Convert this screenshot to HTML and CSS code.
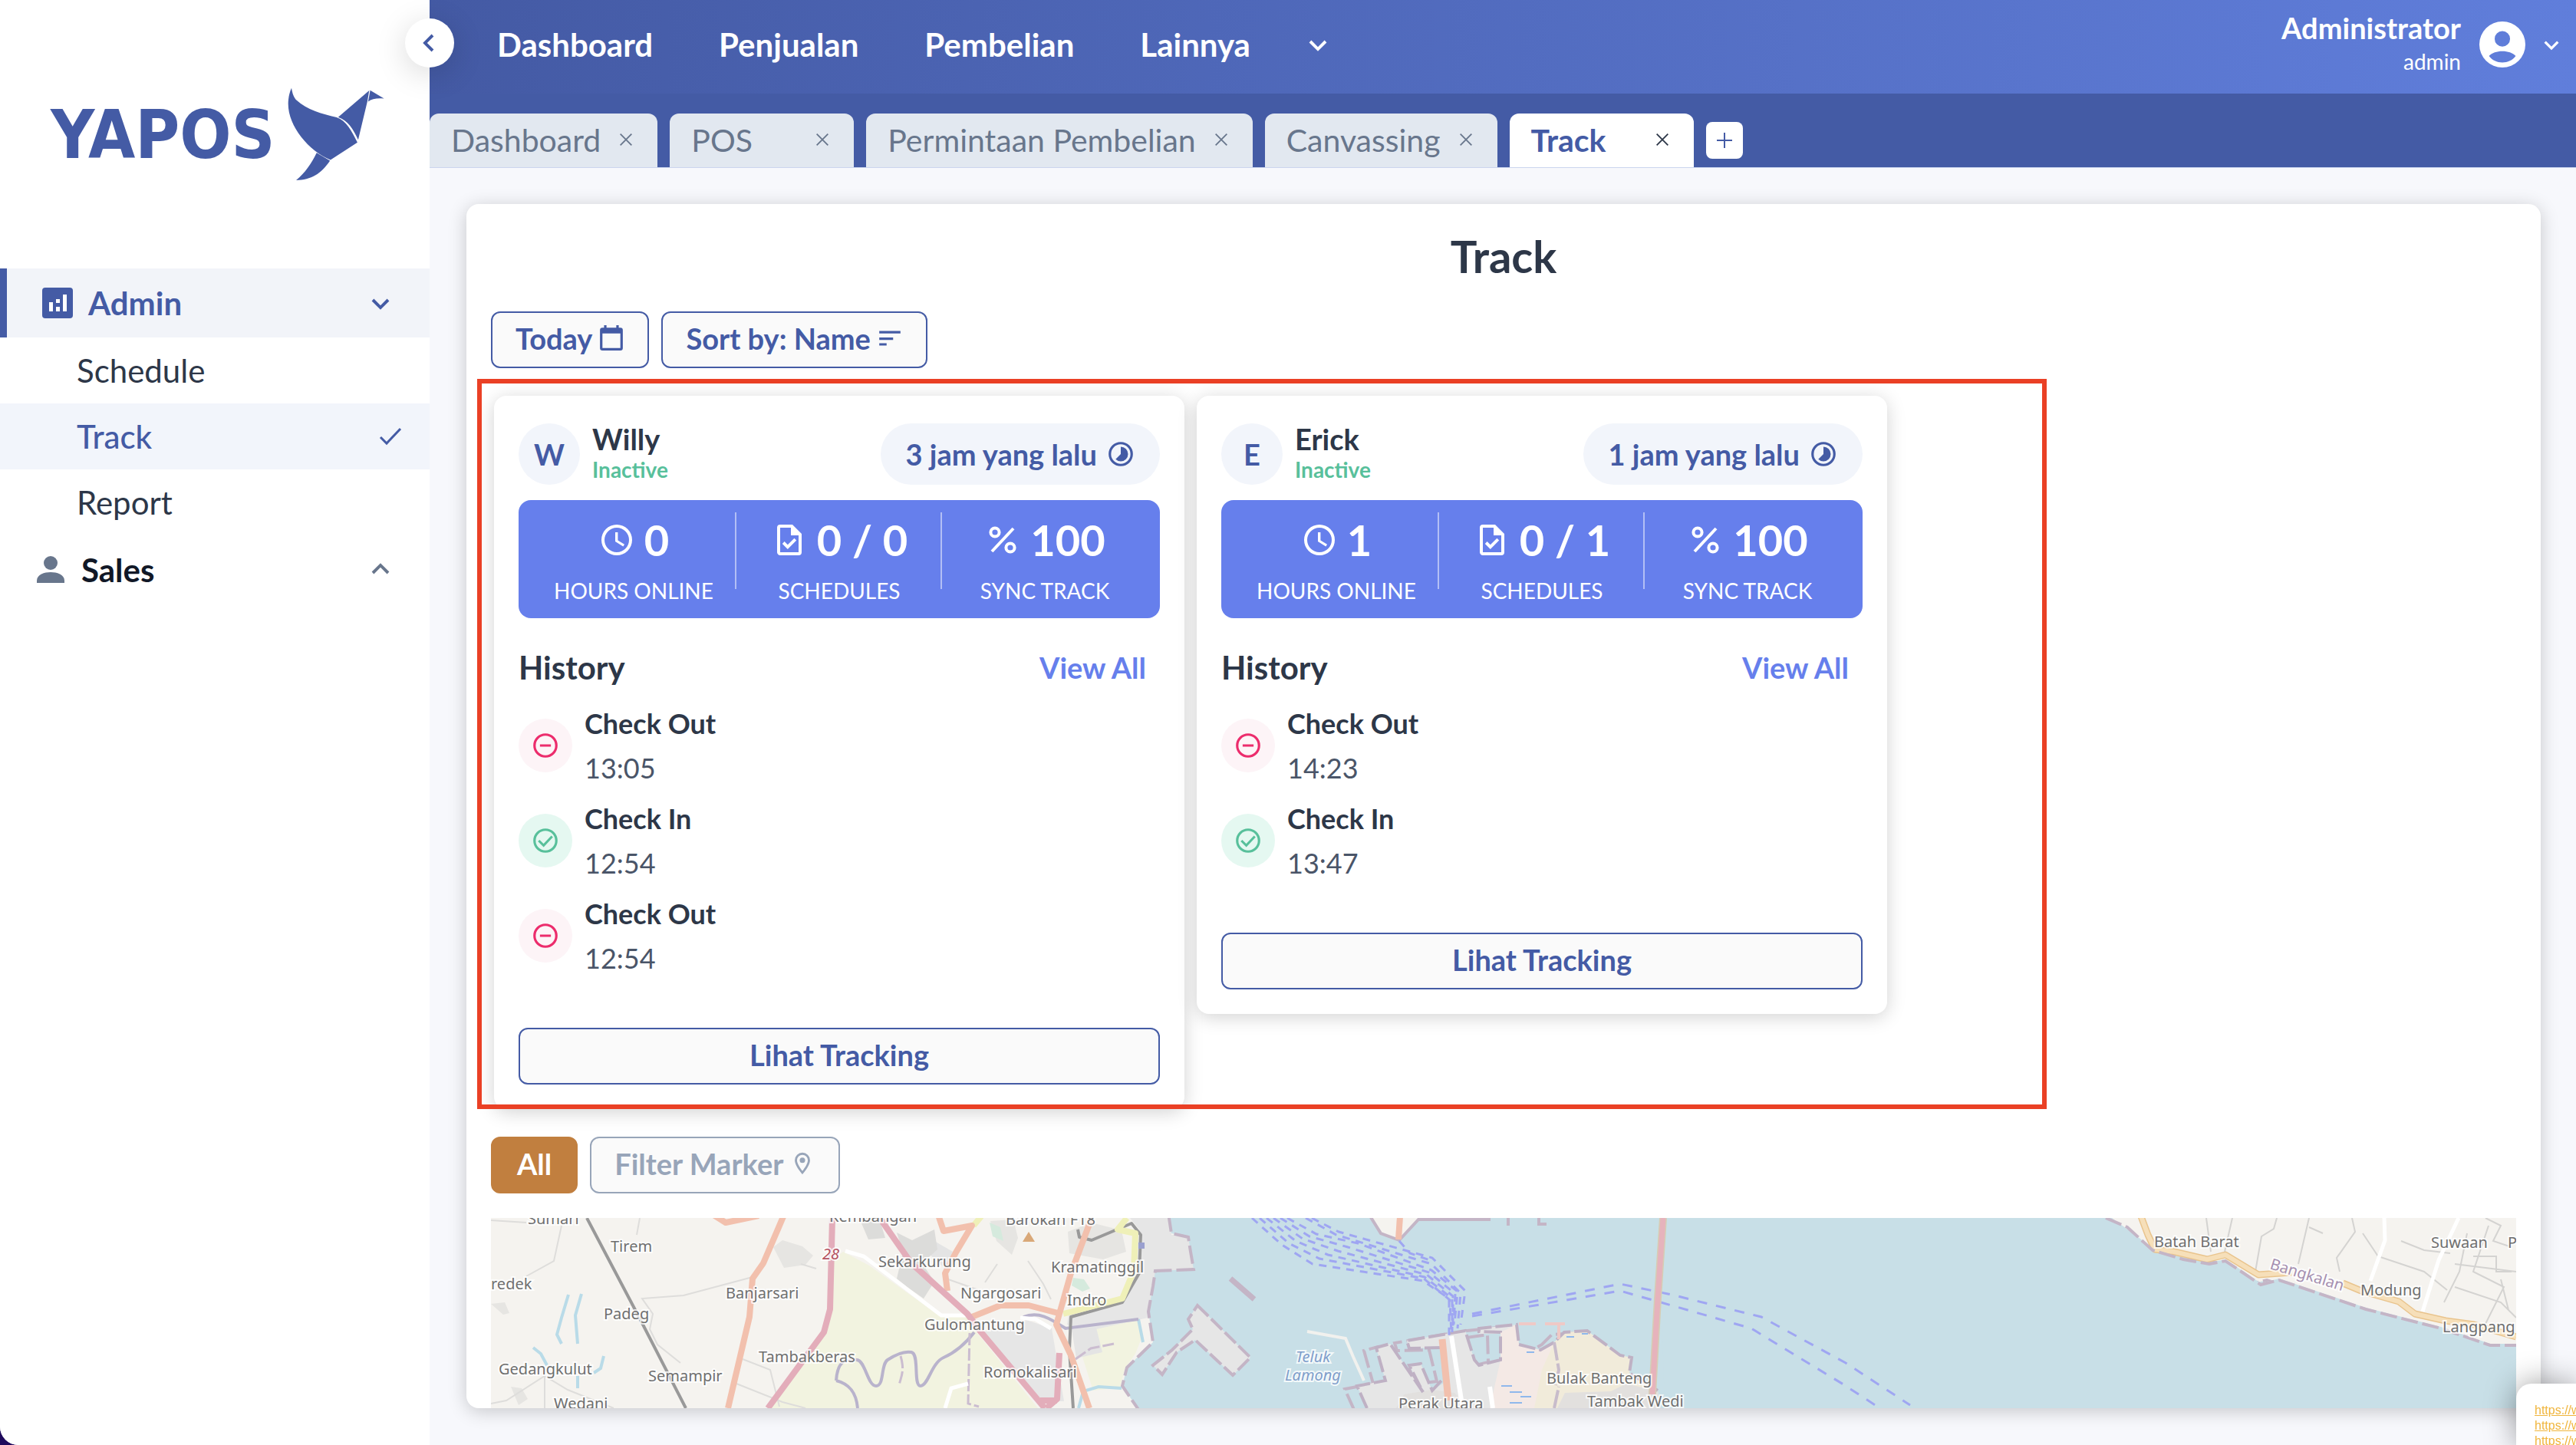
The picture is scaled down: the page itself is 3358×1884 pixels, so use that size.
FILE: index.html
```
<!DOCTYPE html>
<html lang="id">
<head>
    <meta charset="UTF-8">
    <title>YAPOS - Track</title>
    <link rel="stylesheet" href="styles.css">
</head>
<body>

<!-- Shared icons -->
<svg class="sprite" aria-hidden="true">
    <symbol id="chevron" viewBox="0 0 24 24"><path d="M16.3 9.3 12 13.6 7.7 9.3 6.3 10.7 12 16.4l5.7-5.7z"/></symbol>
    <symbol id="close" viewBox="0 0 24 24"><path d="m4 4 16 16M20 4 4 20" fill="none" stroke="currentColor" stroke-width="2"/></symbol>
    <symbol id="clock" viewBox="0 0 24 24"><path d="M12 2a10 10 0 1 0 0 20 10 10 0 0 0 0-20zm0 18a8 8 0 1 1 0-16 8 8 0 0 1 0 16z"/><path d="M12.7 7H11v6l5.2 3.2.8-1.3-4.3-2.6z"/></symbol>
    <symbol id="task" viewBox="0 0 24 24"><path d="M14 2H6a2 2 0 0 0-2 2v16c0 1.1.9 2 2 2h12a2 2 0 0 0 2-2V8zm4 18H6V4h7v5h5zM8.8 13l-1.4 1.5 3.5 3.5 5.7-5.7-1.4-1.4-4.3 4.2z"/></symbol>
    <symbol id="percent" viewBox="0 0 24 24"><g fill="none" stroke="currentColor" stroke-width="2"><circle cx="7" cy="7" r="2.8"/><circle cx="17" cy="17" r="2.8"/><path d="M19 4.5 5 19.5"/></g></symbol>
    <symbol id="timelapse" viewBox="0 0 24 24"><path d="M16.24 7.76A6 6 0 0 0 12 6v6l-4.24 4.24a6 6 0 0 0 8.49 0 6 6 0 0 0-.01-8.48zM12 2a10 10 0 1 0 0 20 10 10 0 0 0 0-20zm0 18a8 8 0 1 1 0-16 8 8 0 0 1 0 16z"/></symbol>
    <symbol id="check-out" viewBox="0 0 24 24"><path d="M12 3a9 9 0 1 0 0 18 9 9 0 0 0 0-18zM7.5 12h9" fill="none" stroke="currentColor" stroke-width="2"/></symbol>
    <symbol id="check-in" viewBox="0 0 24 24"><path d="M12 3a9 9 0 1 0 0 18 9 9 0 0 0 0-18zM6.5 12l4 4 7-7.5" fill="none" stroke="currentColor" stroke-width="2"/></symbol>
</svg>

<div class="app">
    <!-- Sidebar -->
    <aside class="sidebar">
        <a href="#" class="logo" aria-label="YAPOS">
            <span class="logo-text">YAPOS</span>
            <svg class="logo-bird" viewBox="75 70 380 365">
                <path d="M90 72c3 20 9 38 20 48 40 36 97 53 156 67 38 13 58 52 81 98l-105 68c-90-38-175-143-164-236 2-18 6-32 12-45z"/>
                <path d="M272 186 393 82l-7 42-36 150c-20-42-40-75-78-88z"/>
                <path d="m397 81 54 32c-26-2-48 0-62 12z"/>
                <path d="m188 325 52 31c-35 52-73 75-132 76 35-29 59-65 80-107z"/>
            </svg>
        </a>
        <nav>
            <a href="#" class="menu menu-active">
                <svg class="menu-icon" viewBox="0 0 40 40"><rect width="40" height="40" rx="4"/><path fill="#fff" d="M9 19h5v12H9zM18 15h5v5h-5zM18 25h5v6h-5zM27 9h5v22h-5z"/></svg>
                <span>Admin</span>
                <svg class="chevron"><use href="#chevron"/></svg>
            </a>
            <a href="#" class="submenu">Schedule</a>
            <a href="#" class="submenu submenu-active">Track
                <svg class="submenu-check" viewBox="0 0 30 24"><path d="m2 13 8 8L28 2" fill="none" stroke="currentColor" stroke-width="3"/></svg>
            </a>
            <a href="#" class="submenu">Report</a>
            <a href="#" class="menu">
                <svg class="menu-icon" viewBox="0 0 40 40"><circle cx="20" cy="11" r="9"/><path d="M2 37v-3c0-8 10-11 18-11s18 3 18 11v3z"/></svg>
                <span>Sales</span>
                <svg class="chevron chevron-up"><use href="#chevron"/></svg>
            </a>
        </nav>
    </aside>

    <div class="content">
        <button class="collapse" aria-label="Collapse sidebar"><svg class="chevron chevron-left"><use href="#chevron"/></svg></button>

        <!-- Top navigation -->
        <header class="topbar">
            <nav class="topnav">
                <a href="#">Dashboard</a>
                <a href="#">Penjualan</a>
                <a href="#">Pembelian</a>
                <a href="#" class="topnav-more">Lainnya <svg class="chevron"><use href="#chevron"/></svg></a>
            </nav>
            <button class="user">
                <span class="user-name"><b>Administrator</b><small>admin</small></span>
                <svg class="user-icon" viewBox="2 2 20 20"><path fill-rule="evenodd" d="M12 2a10 10 0 1 0 0 20 10 10 0 0 0 0-20zm0 4.2a3.35 3.35 0 1 1 0 6.7 3.35 3.35 0 0 1 0-6.7zM6.2 17c1.3-1.4 3.4-2.1 5.8-2.1s4.5.7 5.8 2.1c-1.4 1.9-3.5 2.8-5.8 2.8S7.6 18.9 6.2 17z"/></svg>
                <svg class="chevron chevron-small"><use href="#chevron"/></svg>
            </button>
        </header>

        <!-- Open tabs -->
        <div class="tabs">
            <div class="tab"><a href="#">Dashboard</a><button aria-label="Close"><svg><use href="#close"/></svg></button></div>
            <div class="tab"><a href="#">POS</a><button aria-label="Close"><svg><use href="#close"/></svg></button></div>
            <div class="tab"><a href="#">Permintaan Pembelian</a><button aria-label="Close"><svg><use href="#close"/></svg></button></div>
            <div class="tab"><a href="#">Canvassing</a><button aria-label="Close"><svg><use href="#close"/></svg></button></div>
            <div class="tab tab-active"><a href="#">Track</a><button aria-label="Close"><svg><use href="#close"/></svg></button></div>
            <button class="tab-add" aria-label="New tab"><svg viewBox="0 0 20 20"><path d="M10 0v20M0 10h20" stroke="currentColor" stroke-width="2"/></svg></button>
        </div>

        <main class="page">
            <section class="panel">
                <h1>Track</h1>
                <div class="toolbar">
                    <button class="btn">Today
                        <svg class="btn-icon" viewBox="0 0 32 32"><path fill-rule="evenodd" d="M7 0h3v3h12V0h3v3h2a3 3 0 0 1 3 3v22a3 3 0 0 1-3 3H5a3 3 0 0 1-3-3V6a3 3 0 0 1 3-3h2zM5 10v18h22V10z"/></svg>
                    </button>
                    <button class="btn">Sort by: Name
                        <svg class="btn-icon" viewBox="0 0 32 32"><path d="M3 7h26v3H3zM3 15h17v3H3zM3 22h9v3H3z"/></svg>
                    </button>
                </div>

                <div class="people">
                    <article class="card">
                        <div class="card-head">
                            <span class="avatar">W</span>
                            <div class="who"><b>Willy</b><small>Inactive</small></div>
                            <span class="pill">3 jam yang lalu <svg><use href="#timelapse"/></svg></span>
                        </div>
                        <div class="stats">
                            <div class="stat"><p><svg><use href="#clock"/></svg> 0</p><span>HOURS ONLINE</span></div>
                            <div class="stat"><p><svg><use href="#task"/></svg>0 / 0</p><span>SCHEDULES</span></div>
                            <div class="stat"><p><svg><use href="#percent"/></svg>100</p><span>SYNC TRACK</span></div>
                        </div>
                        <div class="history-head"><h2>History</h2><a href="#">View All</a></div>
                        <ul class="history">
                            <li><span class="dot dot-out"><svg><use href="#check-out"/></svg></span><div><b>Check Out</b><time>13:05</time></div></li>
                            <li><span class="dot dot-in"><svg><use href="#check-in"/></svg></span><div><b>Check In</b><time>12:54</time></div></li>
                            <li><span class="dot dot-out"><svg><use href="#check-out"/></svg></span><div><b>Check Out</b><time>12:54</time></div></li>
                        </ul>
                        <button class="btn btn-block">Lihat Tracking</button>
                    </article>

                    <article class="card">
                        <div class="card-head">
                            <span class="avatar">E</span>
                            <div class="who"><b>Erick</b><small>Inactive</small></div>
                            <span class="pill">1 jam yang lalu <svg><use href="#timelapse"/></svg></span>
                        </div>
                        <div class="stats">
                            <div class="stat"><p><svg><use href="#clock"/></svg> 1</p><span>HOURS ONLINE</span></div>
                            <div class="stat"><p><svg><use href="#task"/></svg>0 / 1</p><span>SCHEDULES</span></div>
                            <div class="stat"><p><svg><use href="#percent"/></svg>100</p><span>SYNC TRACK</span></div>
                        </div>
                        <div class="history-head"><h2>History</h2><a href="#">View All</a></div>
                        <ul class="history">
                            <li><span class="dot dot-out"><svg><use href="#check-out"/></svg></span><div><b>Check Out</b><time>14:23</time></div></li>
                            <li><span class="dot dot-in"><svg><use href="#check-in"/></svg></span><div><b>Check In</b><time>13:47</time></div></li>
                        </ul>
                        <button class="btn btn-block">Lihat Tracking</button>
                    </article>

                    <div class="highlight"></div>
                </div>

                <div class="toolbar filters">
                    <button class="btn btn-all">All</button>
                    <button class="btn btn-muted">Filter Marker
                        <svg class="btn-icon" viewBox="0 0 24 24"><path d="M12 2a7 7 0 0 0-7 7c0 5.2 7 13 7 13s7-7.8 7-13a7 7 0 0 0-7-7zM7 9a5 5 0 0 1 10 0c0 2.9-2.9 7.2-5 9.9C9.9 16.2 7 11.8 7 9z"/><circle cx="12" cy="9" r="2.5"/></svg>
                    </button>
                </div>

                <!-- Map -->
                <svg class="map" viewBox="0 0 2640 248" preserveAspectRatio="xMidYMin slice">
                    <rect width="2640" height="248" fill="#f5f3ef"/>
                    <!-- land use -->
                    <path fill="#f2f3e0" d="M459 44l34 18 91 65h40l9 22 80 99H361l55-76 25-40 4-77z"/>
                    <path fill="#f2f3e0" d="M790 140l54-8 6 20-10 25-14 20-6 24-35 4-16-50z"/>
                    <path fill="#e6e6e6" d="M640 149l55-17 36 12 16 95h-28zM833 0h54v22h30v47h-50l-6 60-90 20-20-10 2-14 60-10 20-20 8-50 4-30z"/>
                    <path fill="#e4e4e4" d="M757 145l32-2 8 32-34 8zM578 30l24 14-10 22-24-22z"/>
                    <path fill="#dcdcda" d="M480 0h26l8 26-22 2zM529 19l20 10 29-14 4 26-20 18 16 24-14 22-20-14-15-12 8-34z"/>
                    <path fill="#e6e5e2" d="M368 38l12-9 26 8 14 12-10 12-28 4zM752 18l30-12 40 10 6 28-30 10-44-8zM651 4l30-2 6 24-8 22-20-18zM26 220l14 2 8 14-12 8zM0 112l18-2 6 14-8 2z"/>
                    <path fill="#d5eadd" d="M759 78l14 2 8 12-10 4-14-8zM650 6l14 6 4 18-14-6z"/>
                    <!-- sea -->
                    <path fill="#c8dfe7" stroke="#c4b5c6" stroke-width="4" stroke-dasharray="24 6" d="M883-6l4 26 22 5 3 19 4 23-50 2-3 20-6 33 6 40-34 33-6 24 24 35h660l-2-26-37-23 3-20-15-3-43-32-30 2-13 13-18 10-28-7-3-26-49 5v9l27-4 1 36-28 7-6-7-12-38-76 13 3 10 42-1 10 41-16 2-6 15-15-36-15 2 18 35-8 2-35-65-18 5 12 43-37 7 13 29h1532l-34-83-34-3-64-22-98-25-113-38-24 6-46-31-21 4-34-4-40-14-33-28-28-18z"/>
                    <path fill="#c8dfe7" d="M1523 0h590l60 44 67 14 21-4 46 31 24-6 113 38 98 25 64 22h34v84H1530z"/>
                    <path fill="#e6e6e6" d="M1129 219l37-7-12-43 18-5 43 63-18-35 15-2 15 35 22-15-10-41-42 1-3-10 76-13 12 38 6 7 28-5v-36h-28v-7l49-5 3 26v83H1142z"/>
                    <path fill="#f4e9e5" d="M1316 149l21-10 3 26 28 7 18-10 8 86h-92l14-63z"/>
                    <path fill="#f1ebda" d="M1386 162l13-13 30-2 43 32 15 3-3 20 37 23 3 23h-164l10-50z"/>
                    <path fill="#e2e0de" d="M1390 248l10-20 60-2 20-10 41 10 3 22zM1180 248l10-18 36-6 30 4 20 20z"/>
                    <path fill="none" stroke="#bfb1c4" stroke-width="4" stroke-dasharray="22 5" d="M1142 248l-13-29 37-7-12-43 18-5 43 63-18-35 15-2 15 35 12-13M1239 169l-42 1-3-10 76-13 12 38 6 7 28-7v-36l-28-1v-4l49-5 3 26 28 7 18-10 13-13 30-2 43 32 15 3-3 20 37 23"/>
                    <path fill="none" stroke="#c8bccb" stroke-width="4" stroke-dasharray="24 4" d="M1386 162l6 36-4 20M1386 248l6-28"/>
                    <path fill="none" stroke="#f2c0ad" stroke-width="9" d="M1240 158l8 80"/>
                    <path fill="none" stroke="#fff" stroke-width="6" d="M1252 154l14 90M1302 220l4 28"/>
                    <path fill="none" stroke="#efc9c6" stroke-width="4" d="M1340 138h22M1374 138h26M1392 140v18"/>
                    <path fill="none" stroke="#8fb8ec" stroke-width="2" d="M1317 219h14M1328 227h16M1342 233h14M1328 241h16M1350 175h10M1402 155h10M1422 151h8"/>
                    <path fill="#e6e6e6" stroke="#c4b5c6" stroke-width="4" stroke-dasharray="20 5" d="M921 114l69 68-23 23-49-46-24 16-19 29-12-12 25-20 27-27-6-13z"/>
                    <path fill="none" stroke="#c4b5c6" stroke-width="7" d="M964 79l31 27"/>
                    <path fill="none" stroke="#f1f1ee" stroke-width="4" d="M1064 148l50 9 10 24M1124 181l14 31"/>
                    <path fill="#f5f3ef" stroke="#c4b5c6" stroke-width="4" d="M1145-4l15 24 24 9 25-27h92v-6z"/>
                    <path fill="none" stroke="#c4b5c6" stroke-width="4" d="M1326 0v10M1366-2v10h10"/>
                    <path fill="none" stroke="#f2c0ad" stroke-width="8" d="M1185-2l-2 30"/>
                    <!-- ferry lines -->
                    <g fill="none" stroke="#9fa6f2" stroke-width="3" stroke-dasharray="10 8">
                        <path d="M992 0l39 35 40 25 144 22 34 23v50"/>
                        <path d="M1002 0l38 33 40 20 136 26 34 28 2 44"/>
                        <path d="M1011 0l38 30 42 18 126 29 36 28v44"/>
                        <path d="M1020 0l38 27 46 16 116 31 34 28v40"/>
                        <path d="M1029 0l38 24 50 14 106 33 34 28-2 40"/>
                        <path d="M1038 0l38 21 54 12 96 35 34 28-4 42"/>
                        <path d="M1062 0l40 22 124 38 38 38-4 46"/>
                        <path d="M1070 0l35 18 122 34 43 43-6 44"/>
                        <path d="M1184 30l14 16 29 10"/>
                        <path stroke-dasharray="13 12" d="M1279 125l193-39 67 14 117 29 110 60 84 55"/>
                        <path stroke-dasharray="13 12" d="M1279 128l193-33 67 19 104 30 120 73 43 28"/>
                    </g>
                    <path fill="none" stroke="#d6cdb4" stroke-width="10" d="M1528 0l-7 105-7 125"/>
                    <path fill="none" stroke="#e6b3bc" stroke-width="7" d="M1528 0l-7 105-7 125"/>
                    <!-- small roads and creeks -->
                    <path fill="none" stroke="#dedddb" stroke-width="2" d="M0 3l46 3M92 10l-10 46-36 20M194 0l-4 22M341 77l-90 24-54 4 14 20-4 20 10 20 30 24M0 242l20-4 50-32 30 18 60 24M70 206v42M328 184l36 14 12 48M320 216l60 24 30 8M404 60l20 6M660 60l-16 24M700 56l20 30 10 20M596 80l40 14 20 10"/>
                    <path fill="none" stroke="#d4d3d1" stroke-width="2" d="M2236 0l6 44M2270 0l-10 44M2328 0l-4 14-16 10-8 46M2370 0l-14 60M2370 12l18 8M2426 0l4 18-24 34 4 18M2440 20l20 30 60 20 30 24M2490 30l30 12 34 4M2576 20l-10 50-20 40M2604 10l-20 60 40 20-30 60M2600 0l20 10-10 20 24 8M2560 60l80 10M2560 90l60 20 20 20M2584 50h30v20h20M2620 80l10 40"/>
                    <path fill="none" stroke="#b9dbe8" stroke-width="4" d="M101 100l-9 30-6 22 6 12M118 99l-8 28 3 37M55 169l10 8 8 15M147 180l-4 16-9 6M113 206v16M844 132l6 30M766 248l6-22 20-6 30 2"/>
                    <path fill="none" stroke="#b9b3cc" stroke-width="4" d="M450 212c2-30 16-28 27-27s14 34 25 34 6-28 15-34 20-12 31-10 2 44 12 44 14-30 30-37 30-20 40-33M694 129c20-8 35 2 55 15l95-12M450 212c16 4 26 14 28 36"/>
                    <path fill="none" stroke="#cbbdd0" stroke-width="3" stroke-dasharray="16 4" d="M624 150l-2 92 14 4M534 180c6 20 0 28-2 38M762 184l20-14 30-6"/>
                    <path fill="none" stroke="#fff" stroke-width="5" d="M462 43l24 7 101 77h37M622 216l-22 6-8 26M2468 0l1 29-19 53M2565 0l-26 55-21 67M690 130l20 2 20 12"/>
                    <!-- main roads -->
                    <g fill="none" stroke-width="8" stroke-linejoin="round">
                        <path stroke="#999" stroke-width="4" d="M125 0l71 135 58 113M765 15l2 10 16 4 52-22 12 15-2 50-22 38-67 19-2 43 5 76"/>
                        <path stroke="#eff0b8" d="M629 10l10-12M829 0l-12 15 23 5-2 49-15 36-77 20"/>
                        <path stroke="#f2c0ad" d="M382-4l-27 63-14 20-4 50-28 119M290-4l16 10 43-9M583-4l7 21 37-7-21 35-14 27 3 23M627 129l37-15h37l42 11M783 0l-27 72-19 67 19 40 24 69"/>
                        <path stroke="#e3adba" d="M445 0l-3 119-8 30-73 99M504-4l44 63 73 66 18 24 83 99M741 176l-3 60-14 12M716 238h22"/>
                        <path stroke="#e9c48d" stroke-width="9" d="M2151-2l9 24 9 19 25 3 43 10 24-6 43 26 43-3M2414 85l24 10 49 14 21 16 40 9 37 5 55 16"/>
                        <path stroke="#f6dfb9" stroke-width="6" d="M2151-2l9 24 9 19 25 3 43 10 24-6 43 26 43-3M2414 85l24 10 49 14 21 16 40 9 37 5 55 16"/>
                    </g>
                    <path fill="none" stroke="#c4b5c6" stroke-width="4" stroke-dasharray="22 6" d="M2105 0l28 12 33 30 40 12 34 6 21-4 46 31 24-6 113 38 98 25 64 22h34"/>
                    <path fill="#d9a878" d="M701 18l8 13h-16z"/>
                    <rect x="844" y="32" width="8" height="8" fill="#9aa0cf"/>
                    <!-- place names -->
                    <g class="places">
                        <text x="48" y="8">Sumari</text>
                        <text x="156" y="44">Tirem</text>
                        <text x="0" y="93">redek</text>
                        <text x="147" y="132">Padeg</text>
                        <text x="10" y="204">Gedangkulut</text>
                        <text x="205" y="213">Semampir</text>
                        <text x="82" y="249">Wedani</text>
                        <text x="306" y="105">Banjarsari</text>
                        <text x="441" y="5">Kembangan</text>
                        <text x="671" y="9">Barokah F18</text>
                        <text x="505" y="64">Sekarkurung</text>
                        <text x="730" y="71">Kramatinggil</text>
                        <text x="612" y="105">Ngargosari</text>
                        <text x="751" y="114">Indro</text>
                        <text x="565" y="146">Gulomantung</text>
                        <text x="349" y="188">Tambakberas</text>
                        <text x="642" y="208">Romokalisari</text>
                        <text x="1376" y="216">Bulak Banteng</text>
                        <text x="1429" y="246">Tambak Wedi</text>
                        <text x="1183" y="249">Perak Utara</text>
                        <text x="2168" y="38">Batah Barat</text>
                        <text x="2529" y="39">Suwaan</text>
                        <text x="2629" y="39">P</text>
                        <text x="2437" y="101">Modung</text>
                        <text x="2544" y="149">Langpang</text>
                        <text class="place-road" x="432" y="54">28</text>
                        <text class="place-sea" x="1049" y="188">Teluk</text>
                        <text class="place-sea" x="1035" y="212">Lamong</text>
                        <text class="place-region" transform="translate(2318 66) rotate(17)">Bangkalan</text>
                    </g>
                </svg>
            </section>
        </main>
    </div>
</div>

<!-- Link popup in the corner -->
<div class="popup">
    <a href="#">https://w</a>
    <a href="#">https://w</a>
    <a href="#">https://w</a>
</div>

</body>
</html>
```
FILE: styles.css
```
* {
    box-sizing: border-box;
}

body {
    margin: 0;
    font-family: Lato, "Open Sans", sans-serif;
    font-size: 38px;
    color: #2d3748;
    background-color: #1f0a5c;
}

a {
    color: inherit;
    text-decoration: none;
}

button {
    font: inherit;
    color: inherit;
    background: none;
    border: none;
    padding: 0;
    cursor: pointer;
}

svg {
    fill: currentColor;
    flex-shrink: 0;
}

.sprite {
    display: none;
}

.app {
    display: flex;
    height: 100vh;
    overflow: hidden;
    background-color: #f7f8fc;
    border-bottom-left-radius: 24px;
}

.chevron {
    width: 48px;
    height: 48px;
}

.chevron-up {
    transform: rotate(180deg);
}

.chevron-left {
    transform: rotate(90deg);
}

.chevron-small {
    width: 40px;
    height: 40px;
}

/* Sidebar */
.sidebar {
    flex: 0 0 560px;
    min-width: 0;
    background-color: white;
    font-size: 42px;
}

.logo {
    display: flex;
    align-items: center;
    justify-content: space-between;
    height: 350px;
    padding: 0 58px 0 66px;
    color: #445ba5;
}

.logo-text {
    font-family: "Liberation Sans Narrow", "DejaVu Sans Condensed", sans-serif;
    font-size: 88px;
    font-weight: bold;
}

.logo-bird {
    width: 127px;
    height: 122px;
}

.menu {
    display: flex;
    align-items: center;
    height: 90px;
    padding: 0 40px 0 46px;
    font-weight: bold;
    color: #111827;
}

.menu span {
    flex: 1;
    padding-left: 20px;
}

.menu svg {
    color: #68768c;
}

.menu-icon {
    width: 40px;
    height: 40px;
}

.menu-active,
.menu-active svg {
    color: #445ba5;
}

.menu-active {
    border-left: 9px solid #445ba5;
    background-color: #f2f4f9;
}

.submenu {
    display: flex;
    align-items: center;
    justify-content: space-between;
    height: 86px;
    padding: 0 36px 0 100px;
}

.submenu-active {
    color: #445ba5;
    font-weight: 500;
    background-color: #f2f5fb;
}

.submenu-check {
    width: 30px;
    height: 24px;
}

/* Header */
.content {
    position: relative;
    flex: 1;
    min-width: 0;
    display: flex;
    flex-direction: column;
}

.collapse {
    position: absolute;
    left: -32px;
    top: 24px;
    display: flex;
    align-items: center;
    justify-content: center;
    width: 64px;
    height: 64px;
    border-radius: 50%;
    color: #445ba5;
    background-color: white;
    box-shadow: 0 8px 40px rgba(0, 0, 0, 0.15);
}

.topbar {
    display: flex;
    align-items: center;
    justify-content: space-between;
    height: 122px;
    padding: 0 12px 6px 88px;
    color: white;
    background: linear-gradient(90deg, #445aa4, #607edb);
}

.topnav {
    display: flex;
    gap: 86px;
    font-size: 42px;
    font-weight: bold;
}

.topnav-more {
    display: flex;
    align-items: center;
    gap: 64px;
}

.user {
    display: flex;
    align-items: center;
    gap: 14px;
    text-align: right;
}

.user-name b,
.user-name small {
    display: block;
    line-height: 44px;
}

.user-name small {
    font-size: 28px;
}

.user-icon {
    width: 60px;
    height: 60px;
    margin-left: 10px;
}

/* Tabs */
.tabs {
    display: flex;
    align-items: flex-end;
    gap: 16px;
    height: 97px;
    border-bottom: 1px solid #cbd5ee;
    background-color: #445ba5;
}

.tab {
    display: flex;
    align-items: center;
    justify-content: space-between;
    gap: 22px;
    min-width: 240px;
    height: 70px;
    padding: 0 30px 2px 28px;
    border-radius: 12px 12px 0 0;
    font-size: 41px;
    color: #68768c;
    background-color: #e2e8f0;
}

.tab svg {
    display: block;
    width: 22px;
    height: 22px;
}

.tab-active {
    color: #2d3748;
    background-color: white;
}

.tab-active a {
    color: #445ba5;
    font-weight: bold;
}

.tab-add {
    display: flex;
    align-items: center;
    justify-content: center;
    width: 48px;
    height: 48px;
    margin-bottom: 11px;
    border-radius: 8px;
    color: #445ba5;
    background-color: white;
}

.tab-add svg {
    width: 20px;
    height: 20px;
}

/* Page */
.page {
    flex: 1;
    min-height: 0;
    display: flex;
    padding: 47px 46px 48px 48px;
}

.panel {
    flex: 1;
    min-width: 0;
    display: flex;
    flex-direction: column;
    padding: 32px 32px 0;
    border-radius: 16px;
    background-color: white;
    box-shadow: 0 4px 24px rgba(0, 0, 0, 0.2);
}

h1 {
    margin: 0 0 36px;
    font-size: 58px;
    line-height: 72px;
    text-align: center;
}

.toolbar {
    display: flex;
    gap: 16px;
}

.btn {
    display: flex;
    align-items: center;
    justify-content: center;
    gap: 8px;
    height: 74px;
    padding: 0 30px 4px;
    border: 2px solid #445ba5;
    border-radius: 12px;
    font-weight: bold;
    color: #445ba5;
    background-color: #fafafa;
}

.btn-icon {
    width: 34px;
    height: 34px;
}

.btn-block {
    width: 100%;
}

.btn-all {
    padding: 0 32px 4px;
    color: white;
    border-color: #c17f3f;
    background-color: #c17f3f;
}

.btn-muted {
    color: #98a5b9;
    border-color: #98a5b9;
}

.people {
    position: relative;
    display: flex;
    align-items: flex-start;
    gap: 16px;
    margin-top: 36px;
    padding: 0 4px;
}

/* red frame drawn over the cards */
.highlight {
    position: absolute;
    top: -22px;
    left: -18px;
    right: 612px;
    bottom: 0;
    border: 6px solid #ea4025;
    pointer-events: none;
}

.card {
    flex: 0 1 900px;
    padding: 36px 32px 32px;
    border-radius: 16px;
    background-color: white;
    box-shadow: 0 4px 24px rgba(0, 0, 0, 0.18);
}

.card-head {
    display: flex;
    align-items: center;
    gap: 16px;
}

.avatar {
    width: 80px;
    line-height: 80px;
    border-radius: 50%;
    text-align: center;
    font-weight: bold;
    color: #445ba5;
    background-color: #f2f5fb;
}

.who {
    flex: 1;
}

.who b,
.who small {
    display: block;
    line-height: 40px;
}

.who small {
    font-size: 28px;
    font-weight: bold;
    color: #58c09b;
}

.pill {
    display: flex;
    align-items: center;
    gap: 12px;
    height: 80px;
    padding: 0 32px;
    border-radius: 40px;
    font-weight: bold;
    color: #445ba5;
    background-color: #f2f5fb;
}

.pill svg {
    width: 38px;
    height: 38px;
}

.stats {
    display: grid;
    grid-template-columns: repeat(3, 1fr);
    margin-top: 20px;
    padding: 16px;
    border-radius: 16px;
    color: white;
    background-color: #667fec;
}

.stat {
    text-align: center;
    font-size: 28px;
    line-height: 40px;
}

.stat:not(:last-child) {
    background: linear-gradient(#b3bff5, #b3bff5) right top / 2px 100px no-repeat;
}

.stat p {
    display: flex;
    align-items: center;
    justify-content: center;
    gap: 12px;
    margin: 0 0 10px;
    font-size: 56px;
    font-weight: bold;
    line-height: 72px;
}

.stat svg {
    width: 48px;
    height: 48px;
}

.history-head {
    display: flex;
    align-items: center;
    justify-content: space-between;
    margin-top: 36px;
    padding-right: 18px;
    line-height: 56px;
}

.history-head h2 {
    margin: 0;
    font-size: 42px;
}

.history-head a {
    font-weight: bold;
    color: #667fec;
}

.history {
    margin: 12px 0 58px;
    padding: 0;
    list-style: none;
    font-size: 36px;
}

.history li {
    display: flex;
    align-items: center;
    gap: 16px;
    padding: 4px 0;
}

.history b,
.history time {
    display: block;
    line-height: 58px;
}

.history time {
    color: #4a5568;
}

.dot {
    display: flex;
    align-items: center;
    justify-content: center;
    width: 70px;
    height: 70px;
    border-radius: 50%;
}

.dot svg {
    width: 38px;
    height: 38px;
}

.dot-out {
    color: #ec2c6c;
    background-color: #fdf4f7;
}

.dot-in {
    color: #58c09b;
    background-color: #e5f8f1;
}

.filters {
    margin-top: 36px;
}

/* Map */
.map {
    display: block;
    width: 100%;
    flex: 1;
    min-height: 0;
    margin-top: 32px;
}

.places text {
    font-family: "Noto Sans", sans-serif;
    font-size: 20px;
    fill: #6f6f6f;
    stroke: rgba(255, 255, 255, 0.8);
    stroke-width: 4px;
    paint-order: stroke;
}

.places .place-road {
    font-style: italic;
    fill: #b5525f;
}

.places .place-sea {
    font-style: italic;
    fill: #7f9ecb;
}

.places .place-region {
    fill: #a58fb0;
}

/* Popup */
.popup {
    position: fixed;
    right: 0;
    bottom: 0;
    width: 78px;
    height: 80px;
    overflow: hidden;
    padding: 25px 0 0 24px;
    border-top-left-radius: 20px;
    background-color: white;
    box-shadow: 0 0 40px rgba(0, 0, 0, 0.4);
}

.popup a {
    display: block;
    font-family: "Liberation Sans", sans-serif;
    font-size: 16px;
    line-height: 20px;
    text-decoration: underline;
    color: #f0b53c;
}
```
